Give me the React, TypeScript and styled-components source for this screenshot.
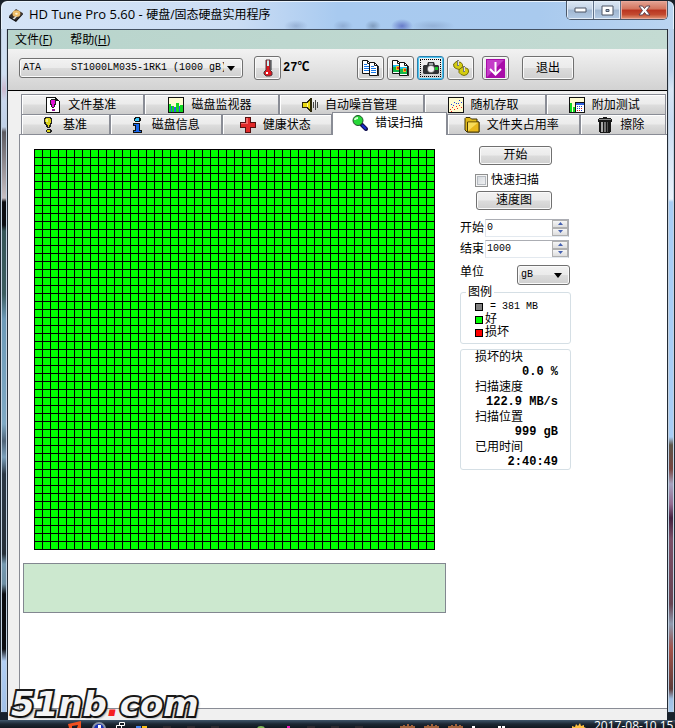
import React from "react";
import styled, { createGlobalStyle, css } from "styled-components";

const ui = '"Open Sans", "Noto Sans CJK SC", sans-serif';
const cjk = '"Liberation Sans", "Noto Sans CJK SC", sans-serif';
const mono = '"Liberation Mono", "Noto Sans CJK SC", monospace';

const GlobalStyle = createGlobalStyle`
  * { box-sizing: border-box; }
  body { margin: 0; background: #10161d; color: #000; font: 12px/16px ${cjk}; }
  button, input, select, textarea { font: inherit; color: inherit; margin: 0; }
  svg { display: block; flex: none; }
`;

const Desktop = styled.div`
  position: relative;
  display: flex;
  flex-direction: column;
  min-height: 100vh;
  background: #18212b;
  overflow: hidden;
`;

const TitleBar = styled.header`
  display: flex;
  align-items: flex-start;
  height: 29px;
  padding: 0 6px 0 8px;
  border: solid #1c222b;
  border-width: 1px 1px 0 1px;
  border-radius: 7px 7px 0 0;
  box-shadow: inset 1px 1px 0 #e8f2fc, inset -1px 0 0 #e8f2fc;
  background:
    radial-gradient(ellipse 11px 7px at 401px 25px, #4a58b8b0, #4a58b800),
    radial-gradient(ellipse 12px 6px at 295px 25px, #7088b070, #7088b000),
    radial-gradient(ellipse 10px 6px at 342px 25px, #7088b070, #7088b000),
    radial-gradient(ellipse 8px 6px at 372px 25px, #60789890, #60789800),
    radial-gradient(ellipse 22px 6px at 432px 25px, #7890b870, #7890b800),
    linear-gradient(90deg, #d5e4f7, #cbddf4 35%, #a8caf0 50%, #a9caee 80%, #bad4f0);
`;

const Title = styled.h1`
  display: flex;
  align-items: center;
  gap: 6px;
  flex: 1;
  height: 27px;
  margin: 0;
  font: 13px/16px ${ui};
  small { font-size: 12px; }
`;

const CaptionButtons = styled.div`
  display: flex;
  height: 19px;
  border: 1px solid #4b5768;
  border-top: 0;
  border-radius: 0 0 5px 5px;
  overflow: hidden;
`;

const CaptionButton = styled.button<{ $close?: boolean }>`
  display: flex;
  align-items: center;
  justify-content: center;
  width: ${(p) => (p.$close ? 46 : 27)}px;
  padding: 0;
  border: 0;
  border-right: ${(p) => (p.$close ? "0" : "1px solid #5f7088")};
  box-shadow: inset 0 0 0 1px ${(p) => (p.$close ? "#eaa99b" : "#e3edf8")};
  background: ${(p) =>
    p.$close
      ? "linear-gradient(#e4a596, #d3735c 45%, #b93420 50%, #c34a30 75%, #e29a78)"
      : "linear-gradient(#dce7f4, #c3d3e6 45%, #9fb5cf 50%, #b5cce6)"};
`;

const Body = styled.div`
  display: flex;
  flex: 1;
`;

const FrameEdge = styled.div<{ $side: "left" | "right" }>`
  flex: none;
  width: 8px;
  margin-bottom: 7px;
  border: solid #232b35;
  border-width: 0 1px 1px 1px;
  box-shadow: inset 1px 0 0 #c3d2e2, inset -1px 0 0 #c3d2e2;
  background: ${(p) =>
    p.$side === "left"
      ? `linear-gradient(#cfdff2 45px, #cbb9ce 60px, #c9d8ee 72px, #c0d0e6 98px, #5c5a60 103px,
         #c8c0c4 169px, #0c0d12 173px, #0c0d12 196px, #365457 202px, #3c5d60 265px, #6d9ab8 290px,
         #7fa9c4 395px, #4f6478 412px, #7ba0bb 428px, #2c3845 445px, #273039 525px, #769ab1 535px,
         #6e8ea3 555px, #0b0c10 565px, #0b0c10 620px, #b2cff4 632px, #a0c1e8)`
      : `linear-gradient(#b6cfeb 40px, #d8e6f5 60px, #c9dcf2 90px, #eaf2fb 170px, #a8cdf5 173px,
         #a8cdf5 408px, #5d5548 416px, #774540 440px, #a7a3c0 455px, #926b90 475px, #43213f 489px,
         #7b5068 510px, #674452 575px, #909cb0 595px, #94676a 611px, #a3534a 620px, #5e3c3a 660px,
         #9fbfe4 670px, #a8caee)`};
`;

const Client = styled.div`
  display: flex;
  flex-direction: column;
  flex: 1;
  min-width: 0;
  border-top: 1px solid #435163;
  background: #f0f0f0;
`;

const MenuBar = styled.nav`
  display: flex;
  gap: 18px;
  height: 19px;
  padding-left: 7px;
  background: linear-gradient(90deg, #b8d4cc, #c4dbd3);
`;

const MenuItem = styled.button`
  padding: 0;
  border: 0;
  background: none;
  font: 12px/19px ${ui};
`;

const Toolbar = styled.div`
  display: flex;
  align-items: center;
  height: 42px;
  padding: 0 11px 3px;
  border-bottom: 1px solid #000;
  background: linear-gradient(#f2f2f2, #d2d2d2);
`;

const face = css`
  border: 1px solid #707070;
  border-radius: 3px;
  box-shadow: inset 0 0 0 1px #fafafa;
  background: linear-gradient(#f2f2f2, #ebebeb 48%, #dcdcdc 52%, #cfcfcf);
`;

const SelectBox = styled.span<{ $width: number }>`
  display: inline-grid;
  grid-template-columns: 1fr 15px;
  align-items: center;
  width: ${(p) => p.$width}px;
  height: 20px;
  ${face}
  select {
    grid-area: 1 / 1 / 2 / 3;
    width: 100%;
    height: 18px;
    padding: 0 18px 0 3px;
    border: 0;
    appearance: none;
    background: none;
    font: 10px/18px ${mono};
  }
  svg { grid-area: 1 / 2; pointer-events: none; }
`;

const ToolButton = styled.button<{ $focused?: boolean }>`
  display: flex;
  align-items: center;
  justify-content: center;
  width: 27px;
  height: 24px;
  padding: 0;
  ${face}
  ${(p) =>
    p.$focused &&
    css`
      border-color: #2c7fae;
      box-shadow: inset 0 0 0 1px #48c4f0;
      outline: 1px dotted #000;
      outline-offset: -4px;
    `}
`;

const TempButton = styled(ToolButton)`
  margin-left: 11px;
`;

const Temperature = styled.output`
  flex: 0 0 76px;
  padding-left: 2px;
  font: bold 12px/16px ${mono};
`;

const ToolGroup = styled.div`
  display: flex;
  gap: 3px;
  margin-right: 8px;
`;

const TextButton = styled.button<{ $width: number; $tall?: boolean }>`
  width: ${(p) => p.$width}px;
  height: ${(p) => (p.$tall ? 24 : 19)}px;
  padding: 0;
  line-height: ${(p) => (p.$tall ? 22 : 17)}px;
  ${face}
`;

const ExitButton = styled(TextButton)`
  margin-left: 13px;
`;

const Notebook = styled.main`
  display: flex;
  flex-direction: column;
  flex: 1;
  padding: 3px 0 11px 11px;
`;

const TabRow = styled.div`
  display: flex;
  height: 20px;
  padding: 0 1px 0 2px;
`;

const Tab = styled.button<{ $grow: number; $active?: boolean }>`
  display: flex;
  align-items: center;
  justify-content: center;
  gap: 7px;
  flex: ${(p) => p.$grow} 1 0;
  min-width: 0;
  height: 20px;
  padding: 0 4px 0 0;
  border: solid #898c95;
  border-width: 1px 1px 0 1px;
  box-shadow: inset 1px 1px 0 #fff;
  background: linear-gradient(#f2f2f2, #ebebeb 48%, #dddddd 52%, #cdcdcd);
  white-space: nowrap;
  ${(p) =>
    p.$active &&
    css`
      z-index: 1;
      height: 23px;
      margin-top: -2px;
      padding-bottom: 3px;
      background: #fff;
    `}
`;

const Panel = styled.section`
  display: flex;
  align-items: flex-start;
  gap: 14px;
  flex: 1;
  padding-left: 3px;
  border: solid #898c95;
  border-width: 1px 0 1px 1px;
  background: #fff;
`;

const ScanColumn = styled.div`
  display: flex;
  flex-direction: column;
  gap: 13px;
  flex: 0 0 423px;
  padding-top: 14px;
`;

const BlockMap = styled.div`
  width: 401px;
  height: 401px;
  margin-left: 11px;
  background:
    repeating-linear-gradient(90deg, #000 0 1px, transparent 1px 8px),
    repeating-linear-gradient(#000 0 1px, transparent 1px 8px),
    #00ff00;
`;

const ErrorLog = styled.textarea`
  display: block;
  width: 100%;
  height: 50px;
  padding: 2px;
  border: 1px solid #828790;
  background: #cce8cf;
  resize: none;
`;

const SideColumn = styled.div`
  display: flex;
  flex-direction: column;
  flex: 0 0 111px;
  padding-top: 11px;
`;

const Actions = styled.div`
  display: flex;
  flex-direction: column;
  align-items: flex-start;
  gap: 5px;
  padding-left: 16px;
  margin-bottom: 7px;
  > :first-child { margin-left: 3px; }
`;

const CheckLabel = styled.label`
  display: flex;
  align-items: center;
  gap: 3px;
  height: 16px;
  margin: 2px 0 -2px -1px;
`;

const CheckBox = styled.input`
  appearance: none;
  width: 13px;
  height: 13px;
  border: 1px solid #8e8f8f;
  box-shadow: inset 0 0 0 1px #f4f4f4, inset 0 0 0 2px #b6bbc1;
  background: linear-gradient(135deg, #cfd4da, #f6f6f6);
`;

const Field = styled.label`
  display: flex;
  align-items: center;
  height: 21px;
  white-space: nowrap;
`;

const SpinBox = styled.span`
  display: flex;
  width: 84px;
  height: 18px;
  margin-left: 1px;
  border: 1px solid #abadb3;
  border-left-color: #e2e3ea;
  border-bottom-color: #e3e9ef;
`;

const SpinInput = styled.input`
  flex: 1;
  min-width: 0;
  padding: 0 1px;
  border: 0;
  background: none;
  font: 10px/16px ${mono};
`;

const SpinButtons = styled.span`
  display: grid;
  grid-template-rows: 1fr 1fr;
  width: 16px;
`;

const SpinButton = styled.button`
  display: flex;
  align-items: center;
  justify-content: center;
  min-height: 0;
  padding: 0;
  border: 1px solid #b0b0b0;
  background: linear-gradient(#f6f6f6, #dddddd);
`;

const UnitField = styled.label`
  display: flex;
  align-items: flex-start;
  justify-content: space-between;
  height: 27px;
  margin-top: 5px;
  padding-right: 1px;
  ${SelectBox} { margin-top: 1px; }
`;

const Legend = styled.fieldset`
  height: 59px;
  margin: -6px 0 5px;
  padding: 0 0 0 14px;
  border: 1px solid #d5dfe5;
  border-radius: 3px;
  min-width: 0;
  legend {
    height: 15px;
    margin-left: -9px;
    padding: 0 2px;
    line-height: 15px;
  }
`;

const LegendItem = styled.div<{ $mono?: boolean }>`
  display: flex;
  align-items: center;
  gap: ${(p) => (p.$mono ? 7 : 2)}px;
  height: 13px;
  font: ${(p) => (p.$mono ? `10px/13px ${mono}` : `12px/13px ${cjk}`)};
`;

const Swatch = styled.i<{ $color: string }>`
  width: 8px;
  height: 8px;
  border: 1px solid #000;
  background: ${(p) => p.$color};
`;

const Stats = styled.dl`
  height: 121px;
  margin: 0;
  padding: 0 12px 0 14px;
  border: 1px solid #d5dfe5;
  border-radius: 3px;
  line-height: 15px;
  white-space: nowrap;
  dt { height: 15px; }
  dd { height: 15px; margin: 0; text-align: right; font: bold 12px/15px ${mono}; }
`;

const Taskbar = styled.footer`
  display: flex;
  height: 8px;
  padding-left: 63px;
  overflow: hidden;
  background: linear-gradient(#40566b, #1c2733 50%, #111820);
`;

const TaskIcons = styled.div`
  display: flex;
  flex: 1;
`;

const Clock = styled.time`
  width: 81px;
  color: #fff;
  font: 12px/12px ${ui};
  white-space: nowrap;
`;

const Watermark = styled.div`
  position: absolute;
  left: 11px;
  bottom: 6px;
  z-index: 2;
  color: #f4f4f4;
  font: italic bold 34px/36px "DejaVu Sans", sans-serif;
  -webkit-text-stroke: 4px #1a1a1a;
  paint-order: stroke fill;
  text-shadow: 2px 2px 2px #0007;
  pointer-events: none;
  span { color: #f52020; -webkit-text-stroke: 0; text-shadow: none; }
`;

const Svg = ({ children, size = 16, crisp = true }: { children: React.ReactNode; size?: number; crisp?: boolean }) => (
  <svg width={size} height={size} viewBox="0 0 16 16" shapeRendering={crisp ? "crispEdges" : "auto"} aria-hidden="true">
    {children}
  </svg>
);

const Arrow = () => (
  <svg width="8" height="5" viewBox="0 0 8 5" aria-hidden="true">
    <path d="M0 0h8L4 5z" />
  </svg>
);

const SpinArrow = ({ down }: { down?: boolean }) => (
  <svg width="5" height="3" viewBox="0 0 5 3" aria-hidden="true">
    <path d={down ? "M0 0h5L2.5 3z" : "M0 3h5L2.5 0z"} fill="#4460b0" />
  </svg>
);

const DiskIcon = () => (
  <Svg size={14} crisp={false}>
    <path d="M0 9 8 1l8 5-8 9z" fill="#3b3029" />
    <path d="M0 9v2l8 5 8-9V6l-8 8z" fill="#141416" />
    <ellipse cx="8.5" cy="6.5" rx="4.5" ry="3.8" fill="#f0bd68" />
    <ellipse cx="8.5" cy="6.5" rx="1.5" ry="1.2" fill="#fff5d8" />
    <path d="m4 12 4-3 1 1-3 3z" fill="#d8d8d8" />
  </Svg>
);

const ThermoIcon = () => (
  <svg width="11" height="18" viewBox="0 0 11 18" aria-hidden="true">
    <path d="M4 1h4v10l2 2v3l-2 1H4l-2-2v-2l2-2z" fill="#e01820" stroke="#50383c" />
    <path d="M5 1.500h2V7H5z" fill="#c8f4f8" />
    <path d="M4 13h2v2H4z" fill="#fff" />
    <path d="M9 1v10" stroke="#20282c" />
  </svg>
);

const CopyIcon = ({ image }: { image?: boolean }) => (
  <svg width="17" height="17" viewBox="0 0 17 17" aria-hidden="true">
    {[0, 1].map((i) => (
      <g key={i} transform={`translate(${i * 7} ${i * 2})`}>
        <path d="M.5 .5h5l3 3v10h-8z" fill="#fff" stroke="#111" />
        <path d="M5.500 .5v3h3" fill="none" stroke="#111" />
        <path d="M9.500 4v10" stroke="#333" />
        {image ? (
          <g shapeRendering="crispEdges">
            <path d="M1 5h7v7H1z" fill="#16b64a" />
            <path d="M1 5h7v2H1z" fill="#20c0f0" />
            <path d="M4 6h3v4H4z" fill="#f0c020" />
            <path d="M5 7h2v2H5z" fill="#e03020" />
          </g>
        ) : (
          <path d="M2 4.500h3M2 6.500h5M2 8.500h5M2 10.500h5" stroke="#1878e8" />
        )}
      </g>
    ))}
  </svg>
);

const CameraIcon = () => (
  <Svg crisp={false}>
    <path d="M1 5h3l1-3h6l1 3h3l1 1v7l-1 1H1l-1-1V6z" fill="#303234" />
    <path d="M6 3h4v2H6z" fill="#a0a4a8" />
    <circle cx="8" cy="9" r="3.800" fill="#888" />
    <circle cx="8" cy="9" r="3" fill="#f4f4f4" />
    <path d="M12 7h3v3h-3z" fill="#18c828" />
  </Svg>
);

const GearsIcon = () => (
  <Svg crisp={false}>
    <g fill="#d4cc10" stroke="#77700c">
      <path d="m.5 4 1.500-1 1-1.500 3 .5 2 .5 1.500 2v2L8 8.500l-2 1-3-1-2-1.500z" />
      <path d="m6 10 2-2 2-1 3 1 2 1 .5 2v1L14 14.500l-3 1-3-1-2-2z" />
    </g>
    <path d="M5 0v6M11 6v6" stroke="#777" strokeWidth="2" />
    <path d="M5.500 1v4M11.500 7v4" stroke="#ddd" />
  </Svg>
);

const DownIcon = () => (
  <svg width="19" height="19" viewBox="0 0 19 19" aria-hidden="true">
    <path d="M0 0h19v19H0z" fill="#a80ca8" />
    <path d="M1 1h17L1 18z" fill="#c43cc8" />
    <path d="M9.500 3v12M4 10l5.500 5.500L15 10" fill="none" stroke="#fff" strokeWidth="2" />
  </svg>
);

const Bang = ({ color }: { color: string }) => (
  <>
    <path d="M5 0h6v1h1v6h-1v3h-1v1H7v-1H6V8H5V7H4V1h1z" fill="#222" />
    <path d="M6 1h4v1h1v4h-1v2H9v2H8V8H7V7H6V5H5V2h1z" fill={color} />
    <path d="M6 2h2v3H6z" fill="#fff8" />
    <path d="M7 12h4v1h1v2h-1v1H7v-1H6v-2h1z" fill="#222" />
    <path d="M7 13h3v2H7z" fill={color} />
  </>
);

const tabIcons: Record<string, React.ReactNode> = {
  file: (
    <Svg>
      <path d="M1 0h10v1h1v1h1v1h1v1h1v12H1z" fill="#111" />
      <path d="M2 1h8v3h4v11H2z" fill="#fff" />
      <path d="M6 2h4v1h1v5h-1v2H9v1H7v-1H6V8H5V3h1z" fill="#222" />
      <path d="M6 3h4v4H9v3H7V7H6z" fill="#e012d8" />
      <path d="M7 12h3v2H7z" fill="#901090" />
    </Svg>
  ),
  monitor: (
    <Svg>
      <path d="M0 0h16v16H0z" fill="#111" />
      <path d="M1 1h14v14H1z" fill="#fffbd0" />
      <path d="M1 7h2v8H1zM4 9h2v6H4zM8 6h3v9H8zM12 8h3v7h-3z" fill="#10d820" />
      <path d="M3 9h1v6H3zM6 10h2v5H6zM11 9h1v6h-1z" fill="#3458e8" />
    </Svg>
  ),
  sound: (
    <Svg>
      <path d="M0 5h4l4-4h2v14H8l-4-4H0z" fill="#2b2708" />
      <path d="M1 6h4l3-3v10l-3-3H1z" fill="#e8d810" />
      <path d="M5 6h1v4H5z" fill="#fffaa0" />
      <path d="M11 5h1v6h-1zM13 3h1v10h-1zM15 5h1v6h-1z" fill="#444" />
    </Svg>
  ),
  random: (
    <Svg>
      <path d="M0 0h16v16H0z" fill="#111" />
      <path d="M1 1h14v14H1z" fill="#fffbd0" />
      <path d="M3 7h1v1H3zM6 5h1v1H6zM8 6h1v1H8zM11 3h1v1h-1zM13 5h1v1h-1zM5 8h1v1H5zM10 6h1v1h-1z" fill="#2040e0" />
      <path d="M2 12h1v1H2zM4 10h1v1H4zM6 12h1v1H6zM8 9h1v1H8zM9 11h1v1H9zM11 8h1v1h-1zM13 10h1v1h-1zM3 14h1v1H3z" fill="#f02020" />
    </Svg>
  ),
  extra: (
    <Svg>
      <path d="M0 0h16v16H0z" fill="#111" />
      <path d="M1 1h14v14H1z" fill="#fffbd0" />
      <path d="M1 6h2v9H1zM4 10h2v5H4z" fill="#10d820" />
      <path d="M6 5h10v11H6z" fill="#111" />
      <path d="M7 6h8v2H7z" fill="#3060e0" />
      <path d="M7 8h8v7H7z" fill="#fff" />
      <path d="M8 9h1v1H8zM10 9h1v1h-1zM12 9h1v1h-1zM8 11h1v1H8zM10 11h1v1h-1zM12 13h1v1h-1z" fill="#2040d0" />
      <path d="M12 11h1v1h-1zM8 13h1v1H8zM10 13h1v1h-1z" fill="#e02020" />
    </Svg>
  ),
  benchmark: (
    <Svg>
      <Bang color="#dcd418" />
    </Svg>
  ),
  info: (
    <Svg>
      <path d="M6 0h5v1h1v3h-1v1H6V4H5V1h1zM4 6h7v7h2v3H4v-3h2V9H4z" fill="#111" />
      <path d="M7 1h3v3H6V2h1z" fill="#38c8f8" />
      <path d="M5 7h5v7h2v1H5v-1h2V8H5z" fill="#1868f0" />
    </Svg>
  ),
  health: (
    <Svg>
      <path d="M5 0h6v5h5v6h-5v5H5v-5H0V5h5z" fill="#541010" />
      <path d="M6 1h4v5h5v4h-5v5H6v-5H1V6h5z" fill="#e02828" />
      <path d="M6 1h2v6H1V6h5z" fill="#f06868" />
    </Svg>
  ),
  scan: (
    <Svg crisp={false}>
      <path d="m9 9 5 5" stroke="#101050" strokeWidth="4" strokeLinecap="round" />
      <path d="m10 10 4 4" stroke="#1830d0" strokeWidth="2" />
      <circle cx="6" cy="5.500" r="5" fill="#28d838" stroke="#205028" />
      <path d="M3 5q0-2 3-2" fill="none" stroke="#d0ffd0" strokeWidth="2" />
    </Svg>
  ),
  folder: (
    <Svg crisp={false}>
      <path d="M1 3V1.500L2 .5h4L7.500 2H13v3h2v10H3L1 13z" fill="#e0b818" stroke="#3c3004" />
      <path d="M3.500 5H15v10H3.500z" fill="#e8b81c" stroke="#4c3c04" />
      <path d="M4 5.500h10L4 14z" fill="#f8dc58" />
    </Svg>
  ),
  trash: (
    <Svg>
      <path d="M6 0h4v1h4v1h1v3H1V2h1V1h4z" fill="#181818" />
      <path d="M2 2h12v1H2z" fill="#888" />
      <path d="M2 5h12v10h-1v1H3v-1H2z" fill="#181818" />
      <path d="M4 5h2v10H4z" fill="#aaa" />
      <path d="M7 5h2v10H7z" fill="#777" />
      <path d="M10 5h1v10h-1z" fill="#555" />
    </Svg>
  ),
};

type TabInfo = { label: string; icon: string; grow: number; active?: boolean };

const upperTabs: TabInfo[] = [
  { label: "文件基准", icon: "file", grow: 123 },
  { label: "磁盘监视器", icon: "monitor", grow: 135 },
  { label: "自动噪音管理", icon: "sound", grow: 145 },
  { label: "随机存取", icon: "random", grow: 122 },
  { label: "附加测试", icon: "extra", grow: 119 },
];

const lowerTabs: TabInfo[] = [
  { label: "基准", icon: "benchmark", grow: 88 },
  { label: "磁盘信息", icon: "info", grow: 112 },
  { label: "健康状态", icon: "health", grow: 110 },
  { label: "错误扫描", icon: "scan", grow: 115, active: true },
  { label: "文件夹占用率", icon: "folder", grow: 134 },
  { label: "擦除", icon: "trash", grow: 85 },
];

const Tabs = ({ items }: { items: TabInfo[] }) => (
  <TabRow role="tablist">
    {items.map((t) => (
      <Tab key={t.label} role="tab" aria-selected={!!t.active} $grow={t.grow} $active={t.active}>
        {tabIcons[t.icon]}
        {t.label}
      </Tab>
    ))}
  </TabRow>
);

const Spin = ({ label, value }: { label: string; value: string }) => (
  <Field>
    {label}
    <SpinBox>
      <SpinInput type="text" inputMode="numeric" aria-label={label} defaultValue={value} />
      <SpinButtons>
        <SpinButton type="button" aria-label={`${label} +`}><SpinArrow /></SpinButton>
        <SpinButton type="button" aria-label={`${label} -`}><SpinArrow down /></SpinButton>
      </SpinButtons>
    </SpinBox>
  </Field>
);

const stats = [
  ["损坏的块", "0.0 %"],
  ["扫描速度", "122.9 MB/s"],
  ["扫描位置", "999 gB"],
  ["已用时间", "2:40:49"],
];

const dim = <path d="M4 6h8v2H4z" fill="#2c2a30" />;
const paw = <path d="M1 8V6h3V5h2v1h2V4h2v2h2V5h2v1h2v2z" fill="#a0623c" />;
const taskIcons: React.ReactNode[] = [
  <path d="M5 4 18 1v7h-4l1-3-6 1v2H6z" fill="#f05020" />,
  <g><circle cx="12" cy="9" r="7" fill="#8a94a8" /><circle cx="12" cy="9" r="5" fill="#1830b8" /><path d="M11 5h3v3h-3z" fill="#fff" /></g>,
  <path d="M8.500 2.500h5v3h-5zM5.500 5.500h5v4h-5z" fill="#111820" stroke="#fff" />,
  <g><path d="M1 6h5v2H1z" fill="#4888f0" /><path d="M7 6h5v2H7z" fill="#f8c018" /></g>,
  dim, dim, dim, null,
  <ellipse cx="6" cy="9" rx="4" ry="3" fill="#80b858" />,
  <path d="M8 6h3v2H8z" fill="#f018b8" />,
  dim, dim, dim, null,
  paw, paw, paw,
  <path d="M1 6h3v2H1z" fill="#fff" />,
  <path d="M3 6h3v2H3zM7 6h3v2H7z" fill="#fff" />,
  null, null,
  <path d="M5 8V6l3 1 1-3 2 2 2-3 1 3 3-1v2l2 1z" fill="#ffc040" />,
];

const driveName = "ATA\u00a0\u00a0\u00a0\u00a0\u00a0ST1000LM035-1RK1\u00a0(1000\u00a0gB)";

export default function App() {
  return (
    <Desktop>
      <GlobalStyle />
      <TitleBar>
        <Title>
          <DiskIcon />
          <span>HD Tune Pro 5.60 - <small>硬盘/固态硬盘实用程序</small></span>
        </Title>
        <CaptionButtons>
          <CaptionButton aria-label="最小化">
            <svg width="13" height="6" viewBox="0 0 13 6"><path d="M1 1h11v4H1z" fill="#fff" stroke="#4c5565" /></svg>
          </CaptionButton>
          <CaptionButton aria-label="最大化">
            <svg width="13" height="11" viewBox="0 0 13 11"><path d="M1 1h11v9H1zM5 4.500h3v2H5z" fill="#fff" fillRule="evenodd" stroke="#4c5565" /></svg>
          </CaptionButton>
          <CaptionButton $close aria-label="关闭">
            <svg width="13" height="11" viewBox="0 0 13 11"><path d="M1 1h3.500l2 2.500L8.500 1H12L8.500 5.500 12 10H8.500l-2-2.500-2 2.500H1l3.500-4.500z" fill="#fff" stroke="#5c4450" /></svg>
          </CaptionButton>
        </CaptionButtons>
      </TitleBar>
      <Body>
        <FrameEdge $side="left" />
        <Client>
          <MenuBar>
            <MenuItem>文件(<u>F</u>)</MenuItem>
            <MenuItem>帮助(<u>H</u>)</MenuItem>
          </MenuBar>
          <Toolbar>
            <SelectBox $width={224}>
              <select aria-label="硬盘"><option>{driveName}</option></select>
              <Arrow />
            </SelectBox>
            <TempButton aria-label="温度"><ThermoIcon /></TempButton>
            <Temperature>27℃</Temperature>
            <ToolGroup>
              <ToolButton aria-label="复制文本"><CopyIcon /></ToolButton>
              <ToolButton aria-label="复制图像"><CopyIcon image /></ToolButton>
              <ToolButton $focused aria-label="截图"><CameraIcon /></ToolButton>
              <ToolButton aria-label="选项"><GearsIcon /></ToolButton>
            </ToolGroup>
            <ToolButton aria-label="保存"><DownIcon /></ToolButton>
            <ExitButton $width={52} $tall>退出</ExitButton>
          </Toolbar>
          <Notebook>
            <Tabs items={upperTabs} />
            <Tabs items={lowerTabs} />
            <Panel role="tabpanel">
              <ScanColumn>
                <BlockMap role="img" aria-label="错误扫描" />
                <ErrorLog readOnly aria-label="损坏的块" />
              </ScanColumn>
              <SideColumn>
                <Actions>
                  <TextButton $width={73}>开始</TextButton>
                  <CheckLabel><CheckBox type="checkbox" />快速扫描</CheckLabel>
                  <TextButton $width={76}>速度图</TextButton>
                </Actions>
                <Spin label="开始" value="0" />
                <Spin label="结束" value="1000" />
                <UnitField>
                  单位
                  <SelectBox $width={53}>
                    <select><option>gB</option></select>
                    <Arrow />
                  </SelectBox>
                </UnitField>
                <Legend>
                  <legend>图例</legend>
                  <LegendItem $mono><Swatch $color="#808080" />= 381 MB</LegendItem>
                  <LegendItem><Swatch $color="#00ff00" />好</LegendItem>
                  <LegendItem><Swatch $color="#ff0000" />损坏</LegendItem>
                </Legend>
                <Stats>
                  {stats.map(([name, value]) => (
                    <div key={name}>
                      <dt>{name}</dt>
                      <dd>{value}</dd>
                    </div>
                  ))}
                </Stats>
              </SideColumn>
            </Panel>
          </Notebook>
        </Client>
        <FrameEdge $side="right" />
      </Body>
      <Taskbar>
        <TaskIcons>
          {taskIcons.map((icon, i) => (
            <svg key={i} width="24" height="8" viewBox="0 0 24 8" aria-hidden="true">{icon}</svg>
          ))}
        </TaskIcons>
        <Clock>2017-08-10 15</Clock>
      </Taskbar>
      <Watermark>51nb<span>.</span>com</Watermark>
    </Desktop>
  );
}
